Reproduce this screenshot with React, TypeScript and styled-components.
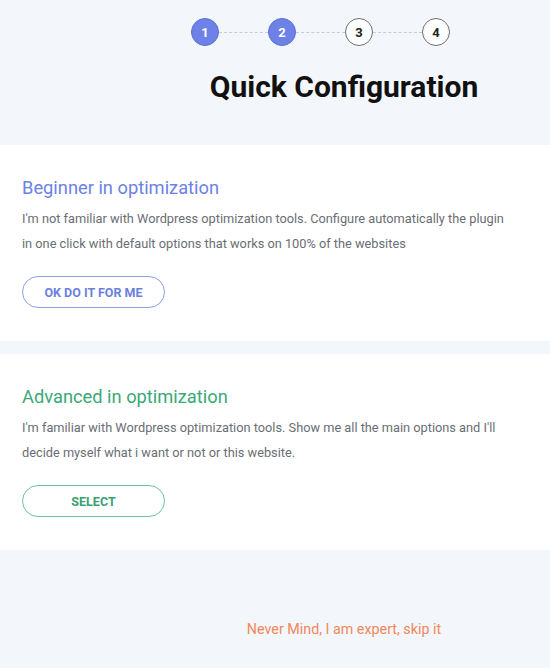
import React from "react";
import styled, { createGlobalStyle } from "styled-components";

const Global = createGlobalStyle`
  html, body { margin: 0; padding: 0; background: #f3f6fa; }
  body { font-family: Roboto, "Liberation Sans", Arial, sans-serif; }
  * { box-sizing: border-box; }
`;

const Page = styled.div`
  width: 550px;
  min-height: 668px;
  background: #f3f6fa;
  display: flex;
  flex-direction: column;
`;

const Header = styled.header`
  height: 145px;
  padding: 18px 0 0 138px;
  display: flex;
  flex-direction: column;
  align-items: center;
`;

const Stepper = styled.div`
  display: flex;
  align-items: center;
  margin-right: 47px;
`;

const Step = styled.div<{ $done?: boolean }>`
  width: 28px;
  height: 28px;
  border-radius: 50%;
  display: flex;
  align-items: center;
  justify-content: center;
  font-size: 13px;
  font-weight: 700;
  background: ${(p) => (p.$done ? "#6d81e6" : "#ffffff")};
  color: ${(p) => (p.$done ? "#ffffff" : "#222")};
  border: 1px solid ${(p) => (p.$done ? "#5a6edb" : "#6f6f6f")};
  flex: none;
`;

const Connector = styled.div`
  width: 49px;
  border-top: 1px dashed #c8ccd3;
`;

const Title = styled.h1`
  margin: 23px 0 0;
  font-size: 30px;
  font-weight: 700;
  line-height: 36px;
  color: #111;
`;

const Panels = styled.div`
  display: flex;
  flex-direction: column;
  gap: 13px;
`;

const Panel = styled.section`
  background: #ffffff;
  height: 196px;
  padding: 30px 30px 0 22px;
`;

const Heading = styled.h2<{ $color: string }>`
  margin: 0;
  font-size: 18.3px;
  font-weight: 400;
  line-height: 25px;
  color: ${(p) => p.$color};
`;

const Body = styled.p`
  margin: 6px 0 0;
  max-width: 490px;
  font-size: 12.78px;
  line-height: 25px;
  color: #6a6e74;
`;

const Button = styled.button<{ $color: string; $border: string }>`
  margin-top: 20px;
  width: 143px;
  height: 32px;
  border-radius: 16px;
  border: 1px solid ${(p) => p.$border};
  background: #ffffff;
  color: ${(p) => p.$color};
  font-family: inherit;
  font-size: 12.5px;
  font-weight: 700;
  text-transform: uppercase;
  cursor: pointer;
  display: block;
`;

const Footer = styled.div`
  flex: 1;
  display: flex;
  justify-content: center;
  padding: 69px 0 0 138px;
`;

const Skip = styled.a`
  font-size: 14.3px;
  line-height: 20px;
  color: #f0885a;
  text-decoration: none;
  cursor: pointer;
`;

export default function App() {
  const steps = [1, 2, 3, 4];
  return (
    <Page>
      <Global />
      <Header>
        <Stepper>
          {steps.map((s, i) => (
            <React.Fragment key={s}>
              {i > 0 && <Connector />}
              <Step $done={s <= 2}>{s}</Step>
            </React.Fragment>
          ))}
        </Stepper>
        <Title>Quick Configuration</Title>
      </Header>
      <Panels>
        <Panel>
          <Heading $color="#6b82e6">Beginner in optimization</Heading>
          <Body>
            I'm not familiar with Wordpress optimization tools. Configure automatically the plugin in one click with
            default options that works on 100% of the websites
          </Body>
          <Button $color="#6b7fe0" $border="#8e9ee8">OK do it for me</Button>
        </Panel>
        <Panel>
          <Heading $color="#3aa877">Advanced in optimization</Heading>
          <Body>
            I'm familiar with Wordpress optimization tools. Show me all the main options and I'll decide myself what i
            want or not or this website.
          </Body>
          <Button $color="#3a9f72" $border="#6cc29c">Select</Button>
        </Panel>
      </Panels>
      <Footer>
        <Skip>Never Mind, I am expert, skip it</Skip>
      </Footer>
    </Page>
  );
}
